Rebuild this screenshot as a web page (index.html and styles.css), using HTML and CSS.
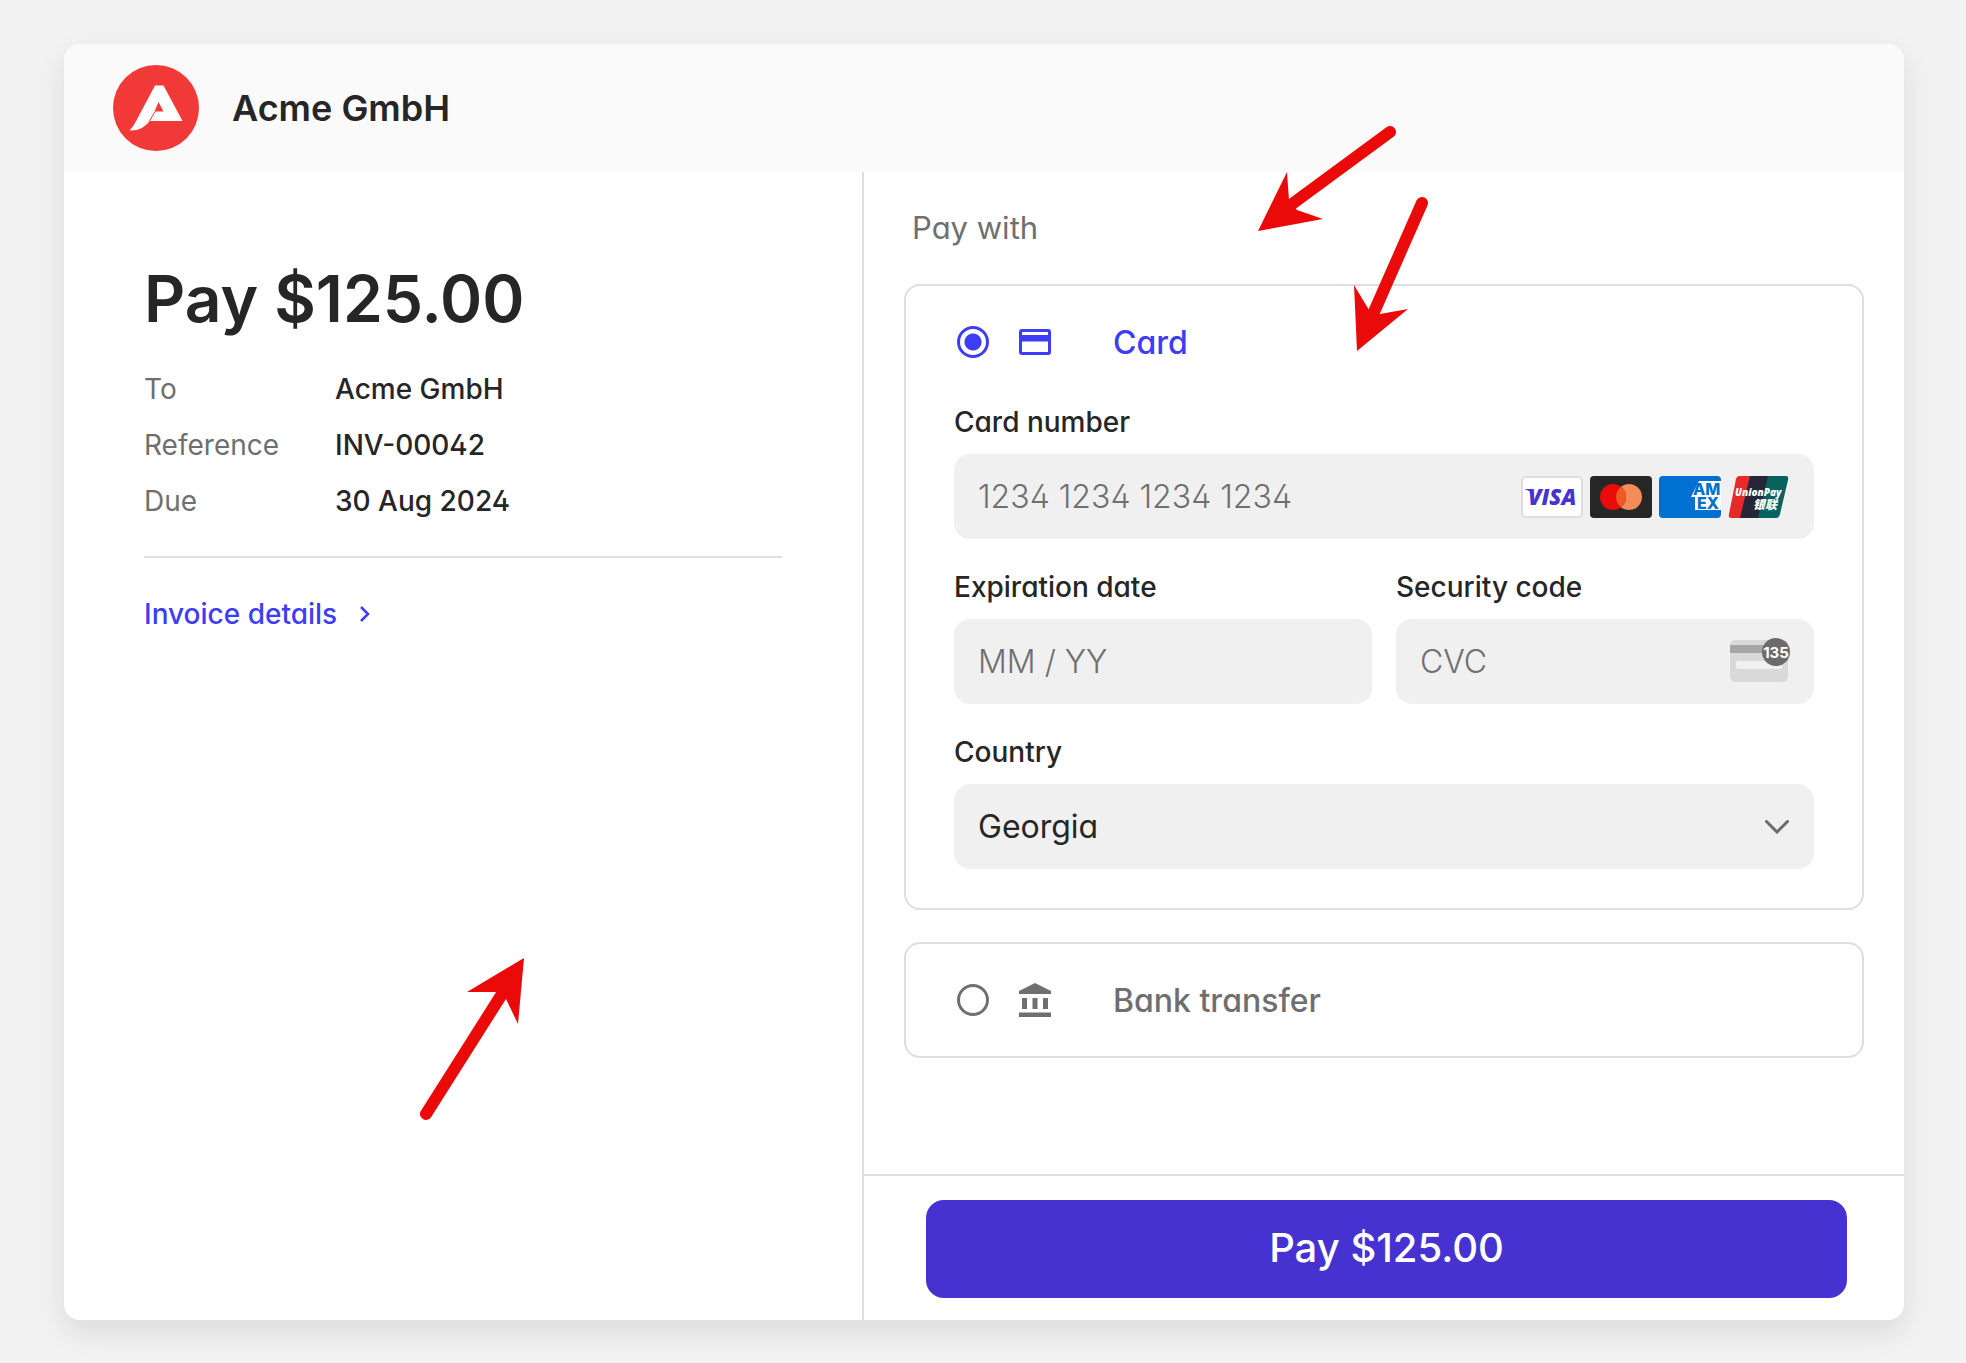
FILE: index.html
```html
<!DOCTYPE html>
<html lang="en">
<head>
    <meta charset="UTF-8">
    <meta name="viewport" content="width=device-width, initial-scale=1.0">
    <title>Acme GmbH - Pay $125.00</title>
    <link rel="stylesheet" href="styles.css">
</head>
<body>
    <div class="checkout">
        <header class="checkout-header">
            <svg class="logo" viewBox="0 0 86 86" aria-hidden="true">
                <circle cx="43" cy="43" r="43" fill="#f13a37"/>
                <path fill="#fff" d="M42 20.500h8.500L69.500 56H36.500C33 61 27 66 16.500 65.500C20 62 23 56.500 25.500 51.500Z"/>
                <path fill="#f13a37" d="M45.500 37L50.500 46.500H41.500Z"/>
                <path fill="none" stroke="#f13a37" stroke-width="1" d="M42 46.500L36.500 56"/>
            </svg>
            <span class="company">Acme GmbH</span>
        </header>

        <main class="checkout-body">
            <section class="summary">
                <h1>Pay $125.00</h1>
                <dl class="details">
                    <dt>To</dt><dd>Acme GmbH</dd>
                    <dt>Reference</dt><dd>INV-00042</dd>
                    <dt>Due</dt><dd>30 Aug 2024</dd>
                </dl>
                <a class="invoice-link" href="#">
                    Invoice details
                    <svg width="12" height="16" viewBox="0 0 12 16" aria-hidden="true"><path d="M2 1l7 7-7 7" fill="none" stroke="currentColor" stroke-width="2.500"/></svg>
                </a>
            </section>

            <form class="payment">
                <div class="methods">
                    <h2>Pay with</h2>

                    <div class="method">
                        <label class="method-header selected">
                            <input type="radio" name="method" checked>
                            <svg class="method-icon" viewBox="0 0 32 32" aria-hidden="true">
                                <path fill="currentColor" fill-rule="evenodd" d="M3 3h26a3 3 0 0 1 3 3v20a3 3 0 0 1-3 3H3a3 3 0 0 1-3-3V6a3 3 0 0 1 3-3ZM3 6v3h26V6ZM3 15.500V26h26V15.500Z"/>
                            </svg>
                            <span>Card</span>
                        </label>

                        <div class="fields">
                            <div class="field wide">
                                <label for="cardNumber">Card number</label>
                                <div class="input-box">
                                    <input type="text" id="cardNumber" placeholder="1234 1234 1234 1234">
                                    <div class="brands">
                                        <svg class="brand" viewBox="0 0 62 42" aria-hidden="true">
                                            <rect x="1" y="1" width="60" height="40" rx="4" fill="#fff" stroke="#dedede" stroke-width="2"/>
                                            <text class="visa" x="7" y="29">VISA</text>
                                            <path d="M3 13h8l2 6C10 16 7 14 3 13Z" fill="#4632d1"/>
                                        </svg>
                                        <svg class="brand" viewBox="0 0 62 42" aria-hidden="true">
                                            <rect width="62" height="42" rx="4" fill="#262627"/>
                                            <circle cx="39" cy="21" r="13" fill="#f28c58"/>
                                            <circle cx="23" cy="21" r="13" fill="#ea0a0a"/>
                                            <path d="M31 10.800a13 13 0 0 1 0 20.400a13 13 0 0 1 0-20.400Z" fill="#ee5a26"/>
                                        </svg>
                                        <svg class="brand" viewBox="0 0 62 42" aria-hidden="true">
                                            <rect width="62" height="42" rx="4" fill="#0070d1"/>
                                            <path d="M40 5h22v29H36V21h-4Z" fill="#fff"/>
                                            <text class="amex" x="34" y="19">AM</text>
                                            <text class="amex" x="38" y="33">EX</text>
                                        </svg>
                                        <svg class="brand" viewBox="0 0 62 42" aria-hidden="true">
                                            <path d="M11 0h16L17 42H3q-3 0-2-4L8 3q1-3 3-3Z" fill="#e8292a"/>
                                            <path d="M22 0h20L33 42H12Z" fill="#262638"/>
                                            <path d="M40 0h18q3 0 2 4l-8 34q-1 4-4 4H30Z" fill="#08635f"/>
                                            <text class="unionpay" x="7" y="20">UnionPay</text>
                                            <text class="unionpay-cn" x="25" y="33">银联</text>
                                        </svg>
                                    </div>
                                </div>
                            </div>

                            <div class="field">
                                <label for="expiry">Expiration date</label>
                                <div class="input-box">
                                    <input type="text" id="expiry" placeholder="MM / YY">
                                </div>
                            </div>

                            <div class="field">
                                <label for="cvc">Security code</label>
                                <div class="input-box">
                                    <input type="text" id="cvc" placeholder="CVC">
                                    <svg class="cvc-icon" viewBox="0 0 60 48" aria-hidden="true">
                                        <rect y="2" width="58" height="42" rx="5" fill="#d9d9d9"/>
                                        <rect y="7" width="58" height="8" fill="#a6a6a6"/>
                                        <rect x="6" y="23" width="46" height="8" rx="2" fill="#f0f0f0"/>
                                        <circle cx="46" cy="14" r="14" fill="#6b6b6b"/>
                                        <text x="46" y="20" text-anchor="middle">135</text>
                                    </svg>
                                </div>
                            </div>

                            <div class="field wide">
                                <label for="country">Country</label>
                                <div class="input-box select-box">
                                    <select id="country">
                                        <option>Georgia</option>
                                    </select>
                                    <svg class="chevron" viewBox="0 0 24 14" aria-hidden="true"><path d="M1.500 1.500L12 12 22.500 1.500" fill="none" stroke="#6b6b6b" stroke-width="3" stroke-linecap="round"/></svg>
                                </div>
                            </div>
                        </div>
                    </div>

                    <div class="method">
                        <label class="method-header">
                            <input type="radio" name="method">
                            <svg class="method-icon" viewBox="0 0 32 34" aria-hidden="true">
                                <path fill="currentColor" d="M16 0L32 8V11H0V8ZM3 15h5v11H3ZM13.500 15h5v11h-5ZM24 15h5v11h-5ZM0 29.500h32v4.500H0Z"/>
                            </svg>
                            <span>Bank transfer</span>
                        </label>
                    </div>
                </div>

                <div class="pay-bar">
                    <button type="submit">Pay $125.00</button>
                </div>
            </form>
        </main>

        <!-- Pointers drawn over the page -->
        <svg class="arrow arrow-header" viewBox="0 0 140 106" aria-hidden="true">
            <path d="M134 7L32 82" stroke="#ea0a0a" stroke-width="12" stroke-linecap="round"/>
            <path d="M2 106L31 47 33 75 41 85 67 94Z" fill="#ea0a0a"/>
        </svg>
        <svg class="arrow arrow-card" viewBox="0 0 76 156" aria-hidden="true">
            <path d="M70 7L22 116" stroke="#ea0a0a" stroke-width="12" stroke-linecap="round"/>
            <path d="M5 155L2 89 17 114 28 118 56 113Z" fill="#ea0a0a"/>
        </svg>
        <svg class="arrow arrow-summary" viewBox="0 0 104 162" aria-hidden="true">
            <path d="M6 156L82 36" stroke="#ea0a0a" stroke-width="12" stroke-linecap="round"/>
            <path d="M104 0L98 66 86 41 76 34 47 34Z" fill="#ea0a0a"/>
        </svg>
    </div>
</body>
</html>
```
FILE: styles.css
```css
* {
    box-sizing: border-box;
}

body {
    font-family: Inter, "Liberation Sans", sans-serif;
    font-feature-settings: "cv11", "cv02";
    margin: 0;
    padding: 44px 62px 43px 64px;
    min-height: 100vh;
    display: flex;
    background-color: #f2f2f2;
    color: #262627;
}

h1, h2, dl, dd {
    margin: 0;
}

.checkout {
    position: relative;
    flex: 1;
    display: flex;
    flex-direction: column;
    background-color: white;
    border-radius: 16px;
    box-shadow: 0 12px 28px rgba(20, 30, 30, 0.1);
}

.checkout-header {
    display: flex;
    align-items: center;
    gap: 33px;
    height: 128px;
    padding: 0 49px;
    background-color: #fafafa;
    border-radius: 16px 16px 0 0;
}

.logo {
    width: 86px;
    height: 86px;
}

.company {
    font-size: 36px;
    font-weight: 600;
}

.checkout-body {
    flex: 1;
    display: grid;
    grid-template-columns: 10fr 13fr;
}

/* Left column */
.summary {
    padding: 87px 80px 40px;
    border-right: 2px solid #dedede;
}

.summary h1 {
    font-size: 64px;
    font-weight: 600;
    line-height: 80px;
    font-feature-settings: normal;
    margin-bottom: 22px;
}

.details {
    display: grid;
    grid-template-columns: 191px 1fr;
    font-size: 28px;
    line-height: 56px;
    padding-bottom: 27px;
    border-bottom: 2px solid #dedede;
}

.details dt {
    color: #6f6f6f;
}

.details dd {
    font-weight: 500;
}

.invoice-link {
    display: inline-flex;
    align-items: center;
    gap: 22px;
    margin-top: 37px;
    font-size: 28px;
    line-height: 38px;
    font-weight: 500;
    color: #3d3df5;
    text-decoration: none;
}

/* Right column */
.payment {
    display: flex;
    flex-direction: column;
    min-width: 0;
}

.methods {
    flex: 1;
    padding: 36px 40px;
}

.methods h2 {
    font-size: 31px;
    font-weight: 400;
    line-height: 40px;
    color: #6f6f6f;
    margin: 0 8px 36px;
}

.method {
    border: 2px solid #dedede;
    border-radius: 16px;
    margin-bottom: 32px;
}

.method-header {
    display: flex;
    align-items: center;
    height: 112px;
    padding: 0 51px;
    font-size: 32px;
    font-weight: 500;
    color: #6f6f6f;
}

.method-header.selected {
    color: #3d3df5;
}

.method-header input {
    appearance: none;
    width: 32px;
    height: 32px;
    margin: 0 30px 0 0;
    border: 3px solid #6f6f6f;
    border-radius: 50%;
}

.method-header input:checked {
    border-color: #3d3df5;
    background: radial-gradient(circle, #3d3df5 8px, transparent 9px);
}

.method-icon {
    width: 32px;
    height: 34px;
    margin-right: 62px;
}

.fields {
    display: grid;
    grid-template-columns: minmax(0, 1fr) minmax(0, 1fr);
    gap: 29px 24px;
    padding: 5px 48px 39px;
}

.wide {
    grid-column: span 2;
}

.field label {
    display: block;
    font-size: 28px;
    font-weight: 500;
    line-height: 38px;
    margin-bottom: 13px;
}

.input-box {
    display: flex;
    align-items: center;
    height: 85px;
    padding: 0 24px;
    background-color: #f0f0f0;
    border-radius: 16px;
}

.input-box input,
.input-box select {
    flex: 1;
    min-width: 0;
    height: 100%;
    padding: 0;
    border: none;
    outline: none;
    background: none;
    font: inherit;
    font-feature-settings: inherit;
    font-size: 32px;
    font-weight: 300;
    color: #262627;
}

.input-box input::placeholder {
    color: #6f6f6f;
}

.select-box {
    position: relative;
}

.input-box select {
    appearance: none;
    font-weight: 400;
}

.chevron {
    position: absolute;
    right: 25px;
    width: 24px;
    height: 14px;
    pointer-events: none;
}

.brands {
    display: flex;
    gap: 7px;
}

.brand {
    width: 62px;
    height: 42px;
}

.visa {
    font: italic 800 22px "Open Sans", sans-serif;
    fill: #4632d1;
}

.amex {
    font: 800 16px Inter, sans-serif;
    fill: #0070d1;
}

.unionpay {
    font: italic 800 10px "Open Sans", sans-serif;
    fill: white;
}

.unionpay-cn {
    font: italic 900 12px "Noto Sans CJK SC", sans-serif;
    fill: white;
}

.cvc-icon {
    width: 60px;
    height: 48px;
}

.cvc-icon text {
    font: 700 15px Inter, sans-serif;
    fill: white;
}

.pay-bar {
    padding: 24px 57px 22px 62px;
    border-top: 2px solid #dedede;
}

.pay-bar button {
    width: 100%;
    height: 98px;
    padding: 0 0 4px;
    border: none;
    border-radius: 18px;
    background-color: #4632d1;
    color: white;
    font-family: inherit;
    font-feature-settings: normal;
    font-size: 40px;
    font-weight: 500;
    cursor: pointer;
}

/* Red pointers */
.arrow {
    position: absolute;
    overflow: visible;
    pointer-events: none;
}

.arrow-header {
    left: 1192px;
    top: 81px;
    width: 140px;
    height: 106px;
}

.arrow-card {
    left: 1288px;
    top: 152px;
    width: 76px;
    height: 156px;
}

.arrow-summary {
    left: 356px;
    top: 914px;
    width: 104px;
    height: 162px;
}
```
